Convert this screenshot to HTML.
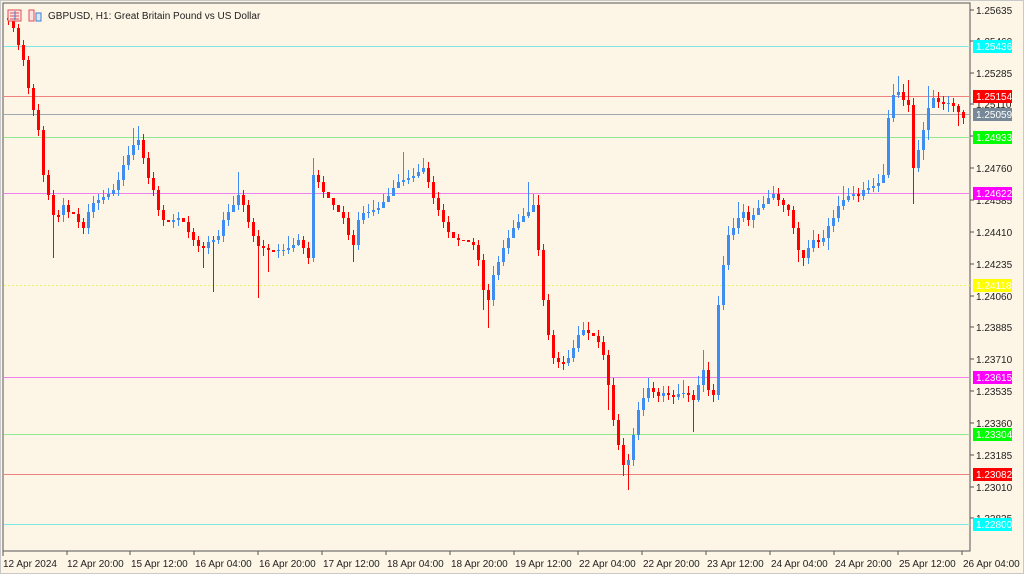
<!DOCTYPE html>
<html><head><meta charset="utf-8"><style>
html,body{margin:0;padding:0;background:#fdf5e6;width:1024px;height:574px;overflow:hidden;font-family:"Liberation Sans",sans-serif}
svg text{font-family:"Liberation Sans",sans-serif;font-size:10px}
</style></head><body>
<svg width="1024" height="574" xmlns="http://www.w3.org/2000/svg">
<rect x="0" y="0" width="1024" height="574" fill="#fdf5e6"/>
<rect x="0.5" y="0.5" width="1023" height="573" fill="none" stroke="#c8c8c8"/>
<rect x="3" y="3" width="967" height="548" fill="none" stroke="#555" stroke-width="1"/>
<g stroke-width="1">
<line x1="4" x2="970" y1="46.5" y2="46.5" stroke="#7fe6e6"/>
<line x1="4" x2="970" y1="96.5" y2="96.5" stroke="#f08080"/>
<line x1="4" x2="970" y1="114.5" y2="114.5" stroke="#a0a8b0"/>
<line x1="4" x2="970" y1="137.5" y2="137.5" stroke="#90e890"/>
<line x1="4" x2="970" y1="193.5" y2="193.5" stroke="#f080f0"/>
<line x1="4" x2="970" y1="285.5" y2="285.5" stroke="#f0f060" stroke-dasharray="2,2"/>
<line x1="4" x2="970" y1="377.5" y2="377.5" stroke="#f080f0"/>
<line x1="4" x2="970" y1="434.5" y2="434.5" stroke="#90e890"/>
<line x1="4" x2="970" y1="474.5" y2="474.5" stroke="#f08080"/>
<line x1="4" x2="970" y1="524.5" y2="524.5" stroke="#7fe6e6"/>
</g>
<!-- wicks -->
<g stroke-width="1" fill="none">
<path stroke="#ff0000" d="M8.5 15V25M13.5 16V32M18.5 24V50M23.5 40V66M28.5 56V94M33.5 84V116M38.5 104V136M43.5 126V182M48.5 170V200M53.5 190V258M58.5 210V222M68.5 200V218M78.5 208V228M83.5 218V234M143.5 134V164M148.5 152V184M153.5 172V196M158.5 186V216M163.5 205V226M188.5 216V238M193.5 228V246M198.5 236V252M203.5 242V268M213.5 236V292M243.5 190V212M248.5 200V228M253.5 218V242M258.5 230V298M263.5 240V256M268.5 244V272M303.5 236V254M308.5 242V264M318.5 170V188M323.5 176V198M333.5 198V210M343.5 206V224M348.5 212V240M353.5 230V262M428.5 162V188M433.5 176V204M438.5 192V216M443.5 204V228M448.5 216V238M458.5 234V246M473.5 238V250M478.5 240V266M483.5 254V310M488.5 284V328M538.5 195V256M543.5 244V306M548.5 294V340M553.5 330V364M558.5 352V368M563.5 356V370M588.5 322V340M598.5 330V348M603.5 336V360M608.5 350V410M613.5 378V426M618.5 414V450M623.5 438V476M628.5 454V490M653.5 382V398M658.5 388V402M668.5 386V400M673.5 390V404M688.5 386V402M693.5 390V432M708.5 362V396M713.5 384V402M748.5 206V226M778.5 188V206M783.5 198V212M788.5 204V216M793.5 206V234M798.5 222V262M803.5 250V266M818.5 234V248M858.5 188V202M903.5 84V106M908.5 80V112M913.5 98V204M938.5 92V108M943.5 96V110M953.5 98V112M958.5 104V126M963.5 110V124"/>
<path stroke="#3d8ef0" d="M63.5 198V222M88.5 204V234M93.5 196V218M98.5 194V210M103.5 190V204M108.5 188V200M113.5 184V196M118.5 172V196M123.5 156V186M128.5 146V170M133.5 128V160M138.5 126V150M173.5 214V228M178.5 212V226M208.5 236V254M218.5 230V244M223.5 212V242M228.5 204V226M233.5 196V212M238.5 172V210M278.5 244V258M283.5 244V256M288.5 236V254M293.5 238V252M298.5 234V246M313.5 158V262M358.5 212V250M363.5 206V224M368.5 204V218M373.5 200V216M378.5 202V214M383.5 194V208M388.5 188V202M393.5 180V194M398.5 174V188M403.5 152V186M408.5 170V184M413.5 168V182M418.5 164V178M423.5 158V174M493.5 266V306M498.5 256V280M503.5 240V266M508.5 230V254M513.5 220V234M518.5 214V230M523.5 208V222M528.5 182V218M533.5 194V212M568.5 350V366M573.5 340V362M578.5 326V352M583.5 322V336M633.5 428V466M638.5 402V440M643.5 388V416M648.5 378V402M663.5 386V402M678.5 384V400M683.5 380V398M698.5 376V402M703.5 350V392M718.5 296V400M723.5 256V310M728.5 226V270M733.5 218V240M738.5 202V234M743.5 204V222M753.5 208V228M758.5 200V214M763.5 196V210M768.5 190V204M773.5 186V200M808.5 240V264M813.5 230V252M823.5 230V246M828.5 218V250M833.5 210V232M838.5 196V222M843.5 186V210M848.5 188V202M853.5 186V200M863.5 182V200M868.5 180V194M873.5 178V192M878.5 174V192M883.5 164V182M888.5 110V178M893.5 84V122M898.5 76V98M918.5 140V172M923.5 122V160M928.5 86V140M933.5 90V104M948.5 96V112"/>
</g>
<!-- bodies -->
<g stroke-width="3" fill="none">
<path stroke="#ff0000" d="M8.5 18V20M13.5 20V28M18.5 28V45M23.5 45V60M28.5 60V88M33.5 88V110M38.5 110V130M43.5 130V175M48.5 175V195M53.5 195V215M58.5 215V217M68.5 205V212M73.5 212V214M78.5 214V222M83.5 222V228M143.5 140V158M148.5 158V178M153.5 178V190M158.5 190V210M163.5 210V220M168.5 220V222M183.5 218V222M188.5 222V232M193.5 232V240M198.5 240V246M203.5 246V248M243.5 195V205M248.5 205V222M253.5 222V236M258.5 236V246M263.5 246V248M268.5 248V250M273.5 250V252M303.5 240V248M308.5 248V258M318.5 175V182M323.5 182V192M328.5 192V198M333.5 198V205M338.5 205V212M343.5 212V218M348.5 218V235M353.5 235V245M428.5 168V182M433.5 182V198M438.5 198V210M443.5 210V222M448.5 222V232M453.5 232V238M458.5 238V240M463.5 240V241M468.5 240V242M473.5 242V245M478.5 245V260M483.5 260V290M488.5 290V300M538.5 205V250M543.5 250V300M548.5 300V335M553.5 335V358M558.5 358V362M563.5 362V364M588.5 330V333M593.5 333V336M598.5 336V342M603.5 342V355M608.5 355V385M613.5 385V420M618.5 420V445M623.5 445V465M653.5 388V392M658.5 392V396M668.5 393V395M673.5 395V397M688.5 393V395M693.5 395V400M708.5 370V390M713.5 390V395M748.5 212V220M778.5 194V200M783.5 200V205M788.5 205V210M793.5 210V228M798.5 228V250M803.5 250V258M818.5 240V242M858.5 194V196M903.5 92V100M908.5 100V105M913.5 105V168M938.5 98V102M943.5 102V104M953.5 103V106M958.5 106V112M963.5 112V118"/>
<path stroke="#3d8ef0" d="M63.5 205V215M88.5 212V228M93.5 203V212M98.5 200V203M103.5 197V200M108.5 194V197M113.5 190V194M118.5 180V190M123.5 165V180M128.5 155V165M133.5 145V155M138.5 140V145M173.5 220V222M178.5 218V220M208.5 242V248M213.5 240V242M218.5 236V240M223.5 220V236M228.5 212V220M233.5 205V212M238.5 195V205M278.5 250V251M283.5 250V251M288.5 248V250M293.5 245V248M298.5 240V245M313.5 175V258M358.5 220V245M363.5 213V220M368.5 212V213M373.5 210V212M378.5 208V210M383.5 202V208M388.5 196V202M393.5 188V196M398.5 182V188M403.5 180V182M408.5 178V180M413.5 176V178M418.5 172V176M423.5 168V172M493.5 275V300M498.5 262V275M503.5 248V262M508.5 238V248M513.5 228V238M518.5 222V228M523.5 216V222M528.5 212V216M533.5 205V212M568.5 358V363M573.5 348V358M578.5 335V348M583.5 330V335M628.5 460V465M633.5 435V460M638.5 410V435M643.5 398V410M648.5 388V398M663.5 393V396M678.5 394V397M683.5 393V394M698.5 385V400M703.5 370V385M718.5 305V395M723.5 265V305M728.5 235V265M733.5 228V235M738.5 218V228M743.5 212V218M753.5 215V220M758.5 208V215M763.5 204V208M768.5 198V204M773.5 194V198M808.5 248V258M813.5 240V248M823.5 238V242M828.5 226V238M833.5 218V226M838.5 206V218M843.5 200V206M848.5 196V200M853.5 194V196M863.5 190V196M868.5 188V190M873.5 186V188M878.5 183V186M883.5 175V183M888.5 118V175M893.5 95V118M898.5 92V95M918.5 150V168M923.5 130V150M928.5 108V130M933.5 98V108M948.5 103V104"/>
</g>
<g fill="#222">
<text x="976" y="14">1.25635</text><text x="976" y="45">1.25460</text><text x="976" y="77">1.25285</text><text x="976" y="108">1.25110</text>
<text x="976" y="172">1.24760</text><text x="976" y="204">1.24585</text><text x="976" y="236">1.24410</text><text x="976" y="268">1.24235</text>
<text x="976" y="300">1.24060</text><text x="976" y="331">1.23885</text><text x="976" y="363">1.23710</text><text x="976" y="395">1.23535</text>
<text x="976" y="427">1.23360</text><text x="976" y="459">1.23185</text><text x="976" y="491">1.23010</text><text x="976" y="522">1.22835</text>
</g>
<g stroke="#555"><path d="M970 10h4M970 41h4M970 73h4M970 104h4M970 136h4M970 168h4M970 200h4M970 232h4M970 264h4M970 296h4M970 327h4M970 359h4M970 391h4M970 423h4M970 455h4M970 487h4M970 518h4"/></g>
<g font-size="10">
<rect x="973" y="40" width="39" height="13" fill="#00ffff"/><text x="976" y="50" fill="#fff">1.25436</text>
<rect x="973" y="90" width="39" height="13" fill="#ff0000"/><text x="976" y="100" fill="#fff">1.25154</text>
<rect x="973" y="108" width="39" height="13" fill="#778899"/><text x="976" y="118" fill="#fff">1.25059</text>
<rect x="973" y="131" width="39" height="13" fill="#00ff00"/><text x="976" y="141" fill="#fff">1.24933</text>
<rect x="973" y="187" width="39" height="13" fill="#ff00ff"/><text x="976" y="197" fill="#fff">1.24622</text>
<rect x="973" y="279" width="39" height="13" fill="#ffff00"/><text x="976" y="289" fill="#fff">1.24118</text>
<rect x="973" y="371" width="39" height="13" fill="#ff00ff"/><text x="976" y="381" fill="#fff">1.23615</text>
<rect x="973" y="428" width="39" height="13" fill="#00ff00"/><text x="976" y="438" fill="#fff">1.23304</text>
<rect x="973" y="468" width="39" height="13" fill="#ff0000"/><text x="976" y="478" fill="#fff">1.23082</text>
<rect x="973" y="518" width="39" height="13" fill="#00ffff"/><text x="976" y="528" fill="#fff">1.22800</text>
</g>
<g stroke="#555"><path d="M3 551v5M67 551v4M130 551v4M194 551v4M258 551v4M322 551v4M386 551v4M450 551v4M514 551v4M578 551v4M642 551v4M706 551v4M770 551v4M834 551v4M898 551v4M962 551v4"/></g>
<g fill="#222">
<text x="3" y="567">12 Apr 2024</text><text x="67" y="567">12 Apr 20:00</text><text x="131" y="567">15 Apr 12:00</text><text x="195" y="567">16 Apr 04:00</text>
<text x="259" y="567">16 Apr 20:00</text><text x="323" y="567">17 Apr 12:00</text><text x="387" y="567">18 Apr 04:00</text><text x="451" y="567">18 Apr 20:00</text>
<text x="515" y="567">19 Apr 12:00</text><text x="579" y="567">22 Apr 04:00</text><text x="643" y="567">22 Apr 20:00</text><text x="707" y="567">23 Apr 12:00</text>
<text x="771" y="567">24 Apr 04:00</text><text x="835" y="567">24 Apr 20:00</text><text x="899" y="567">25 Apr 12:00</text><text x="963" y="567">26 Apr 04:00</text>
</g>
<g>
<rect x="8" y="10" width="13" height="11" fill="#fbe3e3" stroke="#e05050"/><path d="M10 13h9M10 16h9M10 19h9" stroke="#e05050"/><path d="M15 11v9" stroke="#3a80d0"/>
<rect x="29" y="10" width="5" height="11" fill="#fbe3e3" stroke="#e05050"/><rect x="36" y="13" width="5" height="8" fill="#d8e8f8" stroke="#3a80d0"/>
<text x="48" y="19" fill="#222">GBPUSD, H1:  Great Britain Pound vs US Dollar</text>
</g>
</svg>
</body></html>
